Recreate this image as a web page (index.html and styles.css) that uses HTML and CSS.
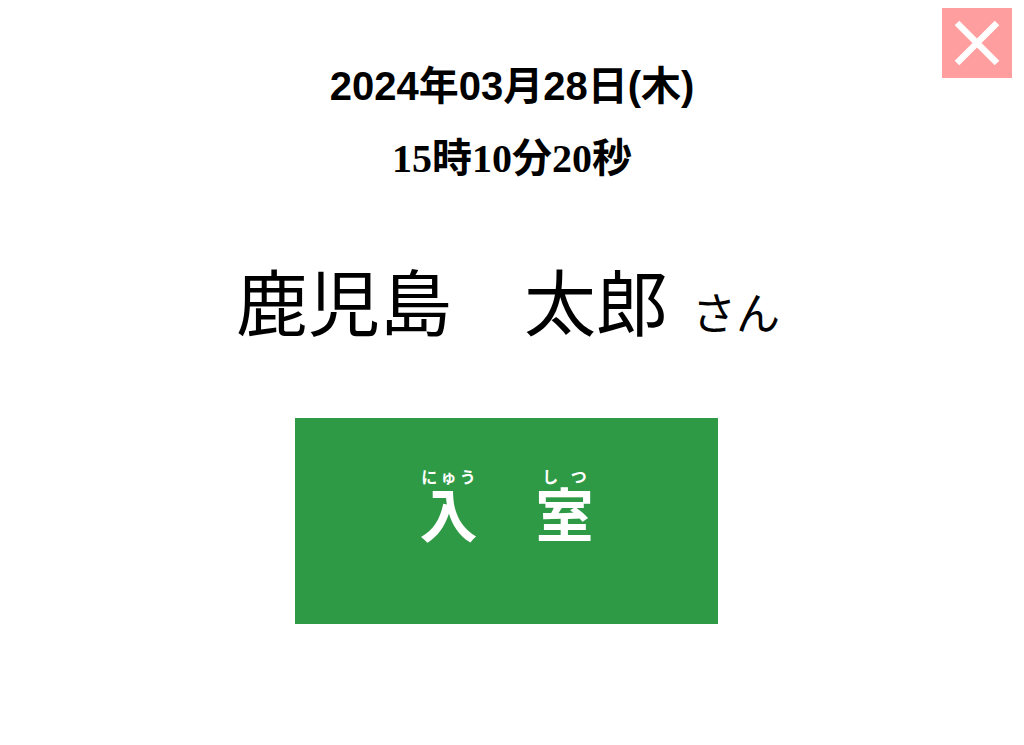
FILE: index.html
```html
<!DOCTYPE html>
<html lang="ja">
<head>
<meta charset="utf-8">
<title>入室</title>
<link rel="stylesheet" href="styles.css">
</head>
<body>
<button class="close" aria-label="閉じる">
  <svg width="46" height="46" viewBox="0 0 46 46"><path d="M3 3 L43 43 M43 3 L3 43" stroke="#fff" stroke-width="6.5" fill="none"/></svg>
</button>
<main class="main">
  <div class="date">2024年03月28日(木)</div>
  <div class="time">15時10分20秒</div>
  <div class="name"><span class="name-main">鹿児島　太郎</span><span class="san">さん</span></div>
  <button class="enter"><ruby>入<rt>にゅう</rt></ruby>　<ruby>室<rt>しつ</rt></ruby></button>
</main>
</body>
</html>
```

FILE: styles.css
```css
html, body {
  margin: 0;
  padding: 0;
  background: #fff;
}
body {
  width: 1024px;
  height: 745px;
  overflow: hidden;
  position: relative;
  font-family: "Noto Sans CJK JP", sans-serif;
  color: #000;
}
.close {
  position: absolute;
  top: 8px;
  right: 12px;
  width: 70px;
  height: 70px;
  border: 0;
  padding: 0;
  background: #ff9e9e;
  display: flex;
  align-items: center;
  justify-content: center;
}
.main {
  display: flex;
  flex-direction: column;
  align-items: center;
}
.date {
  margin-top: 66px;
  font-family: "Liberation Sans", "Noto Sans CJK JP", sans-serif;
  font-weight: bold;
  font-size: 40px;
  line-height: 40px;
}
.time {
  margin-top: 33px;
  font-family: "Liberation Serif", "Noto Sans CJK JP", serif;
  font-weight: bold;
  font-size: 40px;
  line-height: 40px;
}
.name {
  margin-top: 84px;
  line-height: 72px;
  display: flex;
  align-items: baseline;
  margin-left: -8px;
}
.name-main {
  font-size: 72px;
}
.san {
  font-size: 44px;
  margin-left: 24px;
}
.enter {
  margin-top: 71px;
  width: 423px;
  height: 206px;
  margin-left: -11px;
  border: 0;
  background: #2f9a46;
  color: #fff;
  font-family: "Noto Sans CJK JP", sans-serif;
  font-weight: bold;
  font-size: 58px;
  line-height: 1;
  padding: 0 0 33px 0;
}
.enter rt {
  font-size: 16px;
  font-weight: bold;
  line-height: 1.9;
  ruby-align: space-around;
}
```
